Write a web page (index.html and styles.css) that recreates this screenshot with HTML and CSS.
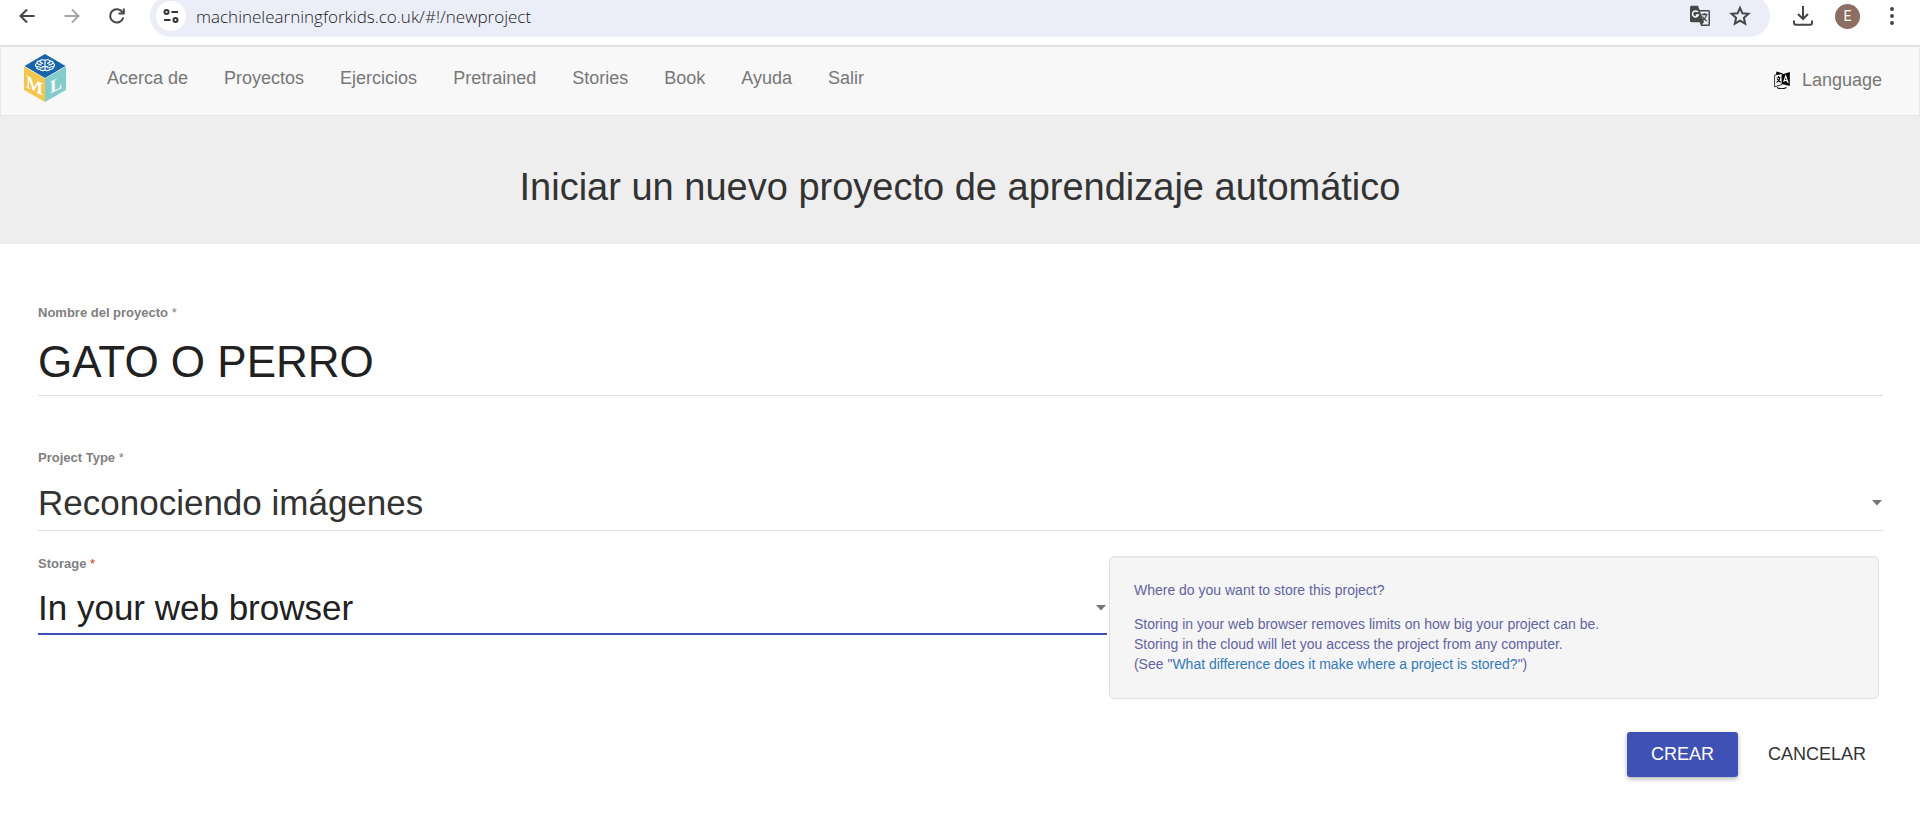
FILE: index.html
```html
<!DOCTYPE html>
<html lang="es">
<head>
<meta charset="utf-8">
<title>Machine Learning for Kids</title>
<link rel="stylesheet" href="styles.css">
</head>
<body>
<header class="browser">
  <div class="browser-nav">
    <button class="icon-btn" aria-label="Atrás"><svg width="20" height="20" viewBox="0 0 20 20" class="line"><path d="M17.500 10H4M10 3.500L3.500 10l6.500 6.500"/></svg></button>
    <button class="icon-btn muted" aria-label="Adelante"><svg width="20" height="20" viewBox="0 0 20 20" class="line"><path d="M2.500 10H16M10 3.500l6.500 6.500-6.500 6.500"/></svg></button>
    <button class="icon-btn" aria-label="Recargar"><svg width="20" height="20" viewBox="0 0 20 20" class="line"><path d="M16.300 11.500A6.700 6.700 0 1 1 15.500 6.300M16.800 2.500V7.500H11.500"/></svg></button>
  </div>
  <div class="omnibox">
    <button class="site-info" aria-label="Información del sitio"><svg width="18" height="18" viewBox="0 0 18 18" class="line"><circle cx="4.500" cy="5" r="2"/><path d="M9.500 5H16M2 13h6.500"/><circle cx="13.500" cy="13" r="2"/></svg></button>
    <input class="url" aria-label="Dirección" value="machinelearningforkids.co.uk/#!/newproject">
    <button class="icon-btn" aria-label="Traducir"><svg width="22" height="22" viewBox="0 0 22 22"><path d="M2.500.8H9l1.500 4.200H19.500a1.500 1.500 0 0 1 1.500 1.500v13a1.500 1.500 0 0 1-1.500 1.500h-7.500l-1.300-3.800H2.500A1.500 1.500 0 0 1 1 15.700V2.300A1.500 1.500 0 0 1 2.500.8z" fill="#474747"/><path d="M11 6.500h8.500v13H13l2-2.500z" fill="#ebeef8"/><path d="M9 7.200A3 3 0 1 0 9.300 10H6.800" fill="none" stroke="#fff" stroke-width="1.500"/><path d="M12.500 9.500h6M15.500 8v1.500M17.500 9.500c-.5 3-2.500 5-4.500 6M13.500 11.500c1 2 2.500 3.500 4.500 4.500" fill="none" stroke="#474747" stroke-width="1.300"/></svg></button>
    <button class="icon-btn" aria-label="Marcador"><svg width="22" height="22" viewBox="0 0 22 22" class="line"><path d="M11 2.800l2.400 5.500 6 .5-4.500 4 1.300 5.900L11 15.600l-5.200 3.100 1.300-5.900-4.500-4 6-.5z"/></svg></button>
  </div>
  <div class="browser-tools">
    <button class="icon-btn" aria-label="Descargas"><svg width="22" height="22" viewBox="0 0 22 22" class="line"><path d="M11 1v12.500M6 9l5 5 5-5M2 15.500V18a1.800 1.800 0 0 0 1.800 1.800h14.400A1.800 1.800 0 0 0 20 18v-2.500"/></svg></button>
    <button class="avatar" aria-label="Perfil">E</button>
    <button class="icon-btn" aria-label="Menú"><svg width="22" height="22" viewBox="0 0 22 22" fill="#474747"><circle cx="11" cy="4" r="2"/><circle cx="11" cy="11" r="2"/><circle cx="11" cy="18" r="2"/></svg></button>
  </div>
</header>

<nav class="navbar">
  <a class="brand" href="#" aria-label="Machine Learning for Kids">
    <svg width="42" height="48" viewBox="0 0 42 48">
      <path d="M21 0l20.500 12L21 24 .5 12z" fill="#1864ab"/>
      <path d="M0 12.500l21 12V48L0 36z" fill="#f3c64f"/>
      <path d="M42 12.500l-21 12V48l21-12z" fill="#84cbcb"/>
      <g fill="none" stroke="#fff" stroke-width="1.200"><path d="M21 6.300c-2-1-4.500-.5-5 .6-2 0-3.500 1-3 2.300-2 .8-2 2.800-.3 3.600-.3 1.700 1.500 2.700 3.300 2.500 1.200 1.500 3.800 1.700 5 .7 1.200 1 3.800.8 5-.7 1.800.2 3.600-.8 3.300-2.500 1.700-.8 1.700-2.800-.3-3.600.5-1.300-1-2.300-3-2.300-.5-1.100-3-1.600-5-.6zM21 6.500V16M16 7c0 1.800 1.500 2.300 3 2.300M13 9.200c1 1.500 3 1.300 4.500 2M13 12.800c1.500-.8 2.500-.3 4 1.400M18 14.500c-.3-1.500.7-2.200 3-2.200M26 7c0 1.800-1.500 2.300-3 2.300M29 9.200c-1 1.500-3 1.300-4.500 2M29 12.800c-1.500-.8-2.500-.3-4 1.400M24 14.500c.3-1.500-.7-2.200-3-2.200"/></g>
      <g class="cube-letter"><text x="2" y="32" transform="skewY(27)">M</text><text x="26" y="53" transform="skewY(-27)">L</text></g>
    </svg>
  </a>
  <ul class="menu">
    <li><a href="#">Acerca de</a></li>
    <li><a href="#">Proyectos</a></li>
    <li><a href="#">Ejercicios</a></li>
    <li><a href="#">Pretrained</a></li>
    <li><a href="#">Stories</a></li>
    <li><a href="#">Book</a></li>
    <li><a href="#">Ayuda</a></li>
    <li><a href="#">Salir</a></li>
  </ul>
  <a class="language" href="#">
    <svg width="16" height="18" viewBox="0 0 16 18"><path d="M8 3.500L15.800 1v14L8 13z"/><path d="M2.500.5L9 2.500 5 4 2 3.500z"/><path d="M.6 4.200L8 2.500v11L.6 15.800z" fill="#fff" stroke="#000" stroke-width=".8"/><path d="M2.500 7l4-.8M4.500 5v1.500M5.800 6.500c-.3 2.500-1.500 4-3.300 5M3.300 8c.8 1.500 2 2.700 3.500 3.200M3 16.500c2.500 1.500 6.500 1.500 9.500 0" fill="none" stroke="#000" stroke-width="1.100"/><path d="M9.700 11l2-6 2.500 7M10.300 9.300l3 .7" fill="none" stroke="#fff" stroke-width="1.100"/></svg>
    <span>Language</span>
  </a>
</nav>

<div class="banner"><h1>Iniciar un nuevo proyecto de aprendizaje automático</h1></div>

<main>
  <form class="project-form">
    <div class="field name-field">
      <label for="name">Nombre del proyecto <span class="star">*</span></label>
      <input id="name" type="text" value="GATO O PERRO">
    </div>
    <div class="field">
      <label for="type">Project Type <span class="star">*</span></label>
      <div class="select-wrap">
        <select id="type"><option>Reconociendo imágenes</option></select>
        <svg class="caret" width="10" height="6" viewBox="0 0 10 6"><path d="M0 0h10L5 5.500z"/></svg>
      </div>
    </div>
    <div class="storage-row">
      <div class="field focused">
        <label for="storage">Storage <span class="star">*</span></label>
        <div class="select-wrap">
          <select id="storage"><option>In your web browser</option></select>
          <svg class="caret" width="10" height="6" viewBox="0 0 10 6"><path d="M0 0h10L5 5.500z"/></svg>
        </div>
      </div>
      <aside class="well">
        <p>Where do you want to store this project?</p>
        <p>Storing in your web browser removes limits on how big your project can be.<br>Storing in the cloud will let you access the project from any computer.<br>(See "<a href="#">What difference does it make where a project is stored?</a>")</p>
      </aside>
    </div>
    <div class="actions">
      <button type="button" class="btn primary">CREAR</button>
      <button type="button" class="btn">CANCELAR</button>
    </div>
  </form>
</main>
</body>
</html>
```

FILE: styles.css
```css
* { box-sizing: border-box; }

body {
  margin: 0;
  background: #fff;
  color: #333;
  font-family: "Liberation Sans", Arial, sans-serif;
  font-size: 18px;
}

button, input, select { font: inherit; color: inherit; }

button {
  padding: 0;
  border: 0;
  background: none;
}

a { text-decoration: none; }

/* Browser toolbar */
.browser {
  display: flex;
  align-items: flex-start;
  height: 46px;
  padding: 0 17px;
  overflow: hidden;
  border-bottom: 1px solid #dcdcdc;
}

.browser-nav,
.browser-tools {
  display: flex;
  align-items: center;
  height: 32px;
}

.browser-nav {
  gap: 25px;
  margin-right: 23px;
}

.browser-tools {
  gap: 21px;
  margin-left: 22px;
}

.icon-btn {
  display: flex;
  color: #474747;
}

.icon-btn.muted { color: #a6a6a6; }

.line {
  fill: none;
  stroke: currentColor;
  stroke-width: 2;
}

.omnibox {
  display: flex;
  flex: 1;
  align-items: center;
  gap: 18px;
  height: 42px;
  margin-top: -5px;
  padding: 0 19px 0 6px;
  border-radius: 21px;
  background: #ebeef8;
}

.site-info {
  display: grid;
  place-items: center;
  width: 30px;
  height: 30px;
  border-radius: 50%;
  background: #fff;
  color: #333;
}

.url {
  flex: 1;
  margin-left: -8px;
  padding: 0;
  border: 0;
  background: none;
  color: #222;
  font-family: "Open Sans", sans-serif;
  font-size: 17px;
  font-weight: 300;
}

.avatar {
  width: 25px;
  height: 25px;
  border-radius: 50%;
  background: #8d6e63;
  color: #fff;
  font-family: Roboto, sans-serif;
  font-size: 14px;
}

/* Site navigation */
.navbar {
  display: flex;
  align-items: center;
  height: 70px;
  padding: 0 37px 0 23px;
  border: 1px solid #e7e7e7;
  background: #f8f8f8;
}

.brand {
  display: flex;
  margin-bottom: 6px;
}

.cube-letter {
  fill: #fff;
  font-family: "Liberation Serif", serif;
  font-size: 18px;
  font-weight: bold;
}

.menu {
  display: flex;
  flex: 1;
  gap: 36px;
  margin: 0 0 6px 41px;
  padding: 0;
  list-style: none;
}

.menu a,
.language { color: #777; }

.language {
  display: flex;
  align-items: center;
  gap: 12px;
  margin-bottom: 2px;
}

/* Page title */
.banner {
  padding: 49px 24px 35px;
  background: #eee;
  text-align: center;
}

.banner h1 {
  margin: 0;
  font-size: 38px;
  font-weight: normal;
  line-height: 44px;
}

/* Form */
.project-form { padding: 61px 37px 40px 38px; }

.field label {
  display: block;
  margin-bottom: 8px;
  color: #808080;
  font-size: 13px;
  font-weight: bold;
  line-height: 16px;
}

.star { font-weight: normal; }

.field input,
.field select {
  display: block;
  width: 100%;
  border: 0;
  border-bottom: 1px solid #e0e0e0;
  border-radius: 0;
  background: none;
  outline: 0;
  appearance: none;
}

.name-field { margin-bottom: 54px; }

.field input {
  height: 67px;
  padding: 0;
  color: #212121;
  font-size: 44px;
}

.field select {
  height: 57px;
  padding: 0 24px 0 0;
  color: #333;
  font-size: 35px;
}

.select-wrap {
  display: grid;
  align-items: center;
}

.select-wrap > * { grid-area: 1 / 1; }

.caret {
  justify-self: end;
  margin-right: 1px;
  fill: #757575;
  pointer-events: none;
}

.focused .star { color: #dd2c00; }

.focused select {
  height: 55px;
  padding-top: 2px;
  border-bottom: 2px solid #3f51b5;
  color: #212121;
}

.storage-row {
  display: grid;
  grid-template-columns: 58fr 42fr;
  align-items: start;
  gap: 2px;
  margin-top: 25px;
}

.well {
  margin-right: 4px;
  padding: 23px 24px 24px;
  border: 1px solid #e3e3e3;
  border-radius: 5px;
  background: #f5f5f5;
  box-shadow: inset 0 1px 1px rgba(0, 0, 0, .05);
  color: #6363a0;
  font-size: 14px;
  line-height: 20px;
}

.well p { margin: 0 0 14px; }
.well p:last-child { margin-bottom: 0; }
.well a { color: #337ab7; }

.actions {
  display: flex;
  justify-content: flex-end;
  gap: 14px;
  margin-top: 33px;
  padding-right: 1px;
}

.btn {
  height: 45px;
  padding: 0 16px;
  border-radius: 3px;
}

.btn.primary {
  padding: 0 24px;
  background: #3f51b5;
  box-shadow: 0 2px 5px rgba(0, 0, 0, .3);
  color: #fff;
}
```
